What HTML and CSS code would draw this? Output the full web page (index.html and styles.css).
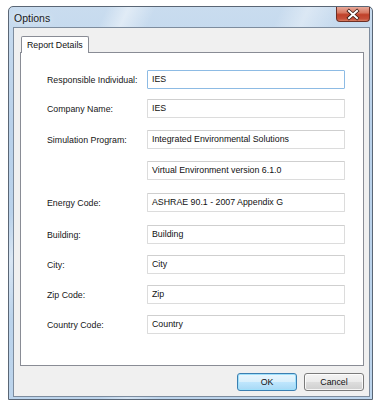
FILE: index.html
```html
<!DOCTYPE html>
<html>
<head>
<meta charset="utf-8">
<link rel="stylesheet" href="styles.css">
</head>
<body>
<div class="window">
  <div class="titlebar">
    <span class="title">Options</span>
    <div class="close">
      <svg width="34" height="15" viewBox="0 0 34 15">
        <path d="M13 4 L21 11 M21 4 L13 11" stroke="#3a1a14" stroke-width="3.6" stroke-linecap="square"/>
        <path d="M13 4 L21 11 M21 4 L13 11" stroke="#ffffff" stroke-width="2" stroke-linecap="square"/>
      </svg>
    </div>
  </div>
  <div class="client">
    <div class="tabs"><div class="tab">Report Details</div></div>
    <div class="panel">
      <div class="row r1"><span class="label">Responsible Individual:</span><div class="field focus">IES</div></div>
      <div class="row r2"><span class="label">Company Name:</span><div class="field">IES</div></div>
      <div class="row r3"><span class="label">Simulation Program:</span><div class="field">Integrated Environmental Solutions</div></div>
      <div class="row r4"><span class="label"></span><div class="field">Virtual Environment version 6.1.0</div></div>
      <div class="row r5"><span class="label">Energy Code:</span><div class="field">ASHRAE 90.1 - 2007 Appendix G</div></div>
      <div class="row r6"><span class="label">Building:</span><div class="field">Building</div></div>
      <div class="row r7"><span class="label">City:</span><div class="field">City</div></div>
      <div class="row r8"><span class="label">Zip Code:</span><div class="field">Zip</div></div>
      <div class="row r9"><span class="label">Country Code:</span><div class="field">Country</div></div>
    </div>
    <div class="buttons">
      <div class="btn default">OK</div>
      <div class="btn">Cancel</div>
    </div>
  </div>
</div>
</body>
</html>
```

FILE: styles.css
```css
html, body {
  margin: 0;
  padding: 0;
  background: #ffffff;
}
body {
  padding: 6px 0 0 8px;
  font-family: "Liberation Sans", Arial, sans-serif;
}
.window {
  box-sizing: border-box;
  width: 365px;
  height: 394px;
  border: 1px solid #5a6675;
  border-radius: 5px 5px 0 0;
  padding: 0 2px 2px 4px;
  display: flex;
  flex-direction: column;
  background:
    linear-gradient(115deg, rgba(255,255,255,0) 18%, rgba(255,255,255,0.45) 22%, rgba(255,255,255,0) 27%,
      rgba(255,255,255,0) 50%, rgba(255,255,255,0.35) 55%, rgba(255,255,255,0) 61%,
      rgba(255,255,255,0) 100%),
    linear-gradient(180deg, #c9dcef 0%, #b9d1ea 30%, #bcd4ec 100%);
}
.titlebar {
  height: 20px;
  display: flex;
  align-items: flex-start;
  justify-content: space-between;
  flex: none;
}
.title {
  font-family: "Liberation Sans", Arial, sans-serif;
  font-size: 10.5px;
  color: #1b1b1b;
  margin: 5px 0 0 1px;
  text-shadow: 0 0 6px rgba(255,255,255,0.9);
}
.close {
  width: 34px;
  height: 15px;
  margin-right: 0;
  box-sizing: border-box;
  border: 1px solid #6e2f25;
  border-top: none;
  border-radius: 0 0 4px 4px;
  background: linear-gradient(180deg, #e9a898 0%, #d77a64 40%, #c0412a 55%, #c6503a 85%, #d97e63 100%);
  display: flex;
  align-items: center;
  justify-content: center;
  overflow: hidden;
}
.close svg {
  display: block;
  flex: none;
}
.client {
  flex: 1;
  box-sizing: border-box;
  border: 1px solid #7d8c9e;
  background: #f0f0f0;
  padding: 8px 5px 0 6px;
  display: flex;
  flex-direction: column;
}
.tabs {
  display: flex;
  position: relative;
  z-index: 1;
  margin-bottom: -1px;
}
.tab {
  margin-left: 1px;
  height: 17px;
  box-sizing: border-box;
  width: 68px;
  border: 1px solid #898c95;
  border-bottom: none;
  border-radius: 2px 2px 0 0;
  background: #ffffff;
  font-size: 8.8px;
  color: #111;
  padding-left: 5px;
  line-height: 16px;
}
.panel {
  height: 314px;
  box-sizing: border-box;
  border: 1px solid #898c95;
  background: #ffffff;
  padding: 17px 0 0 26px;
  display: flex;
  flex-direction: column;
}
.row {
  display: flex;
  align-items: center;
  height: 19px;
}
.r2 { margin-top: 10px; }
.r3 { margin-top: 12px; }
.r4 { margin-top: 12px; }
.r5 { margin-top: 13px; }
.r6 { margin-top: 13px; }
.r7 { margin-top: 11px; }
.r8 { margin-top: 11px; }
.r9 { margin-top: 11px; }
.label {
  width: 100px;
  flex: none;
  font-size: 8.8px;
  color: #161616;
}
.field {
  width: 198px;
  height: 19px;
  box-sizing: border-box;
  border: 1px solid #dcdcdc;
  border-top-color: #cfcfcf;
  border-radius: 1px;
  background: #ffffff;
  font-size: 8.8px;
  color: #111;
  padding-left: 4px;
  line-height: 17px;
  white-space: nowrap;
}
.field.focus {
  border-color: #8dbbe4;
}
.buttons {
  display: flex;
  justify-content: flex-end;
  gap: 7px;
  margin-top: 7px;
}
.btn {
  width: 60px;
  height: 18px;
  box-sizing: border-box;
  border: 1px solid #7a7a7a;
  border-radius: 3px;
  background: linear-gradient(180deg, #f4f4f4 0%, #ebebeb 48%, #dddddd 52%, #cfcfcf 100%);
  box-shadow: inset 0 0 0 1px rgba(255,255,255,0.8);
  font-size: 8.8px;
  color: #111;
  text-align: center;
  line-height: 16px;
}
.btn.default {
  border-color: #3c7fb1;
  background: linear-gradient(180deg, #eaf6fd 0%, #d9f0fc 48%, #bee6fd 52%, #a7d9f5 100%);
  box-shadow: inset 0 0 0 1px #9fe0fb;
}
```
